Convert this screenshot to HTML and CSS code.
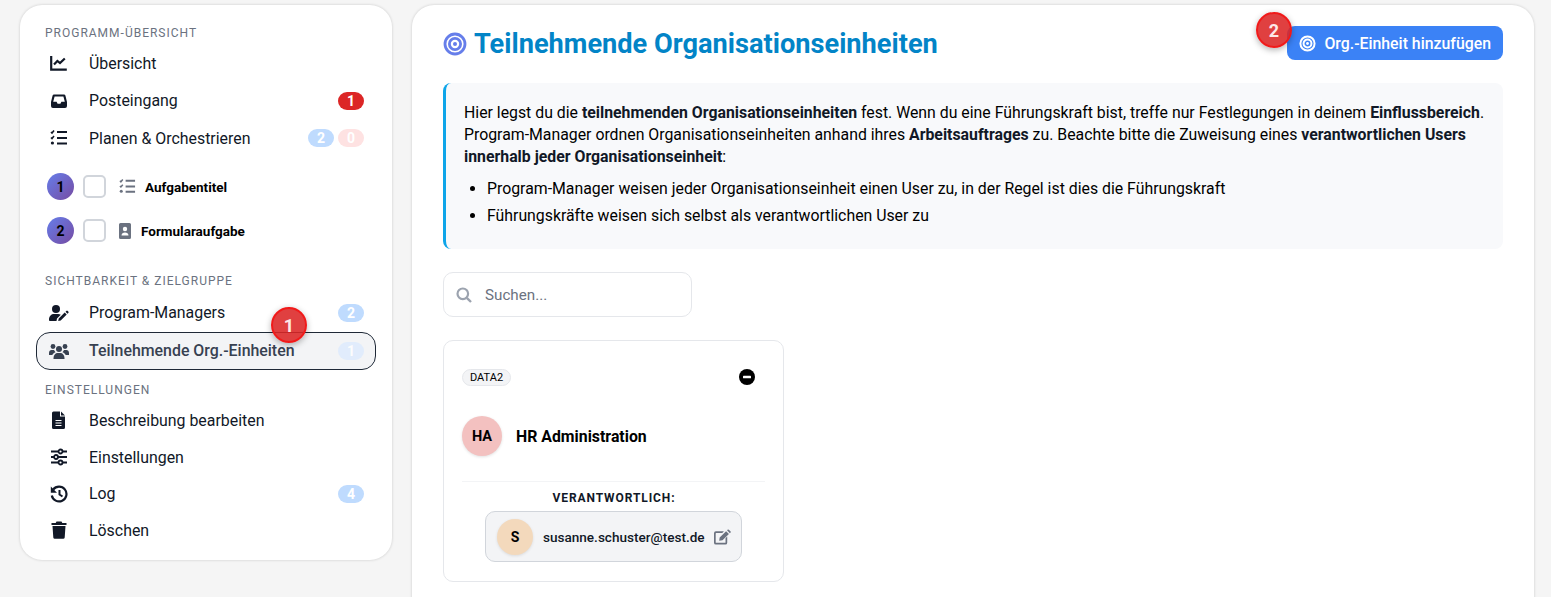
FILE: index.html
```html
<!DOCTYPE html>
<html lang="de">
<head>
<meta charset="utf-8">
<title>Teilnehmende Organisationseinheiten</title>
<link rel="stylesheet" href="styles.css">
</head>
<body>
<svg class="defs" width="0" height="0" aria-hidden="true">
  <symbol id="i-list" viewBox="0 0 18 18">
    <path d="M1 3l1 1 2-2.400M1 8.500l1 1 2-2.400" fill="none" stroke="currentColor" stroke-width="1.600"/>
    <circle cx="2.400" cy="14" r="1.600" fill="currentColor"/>
    <path d="M7 3h10M7 9h10M7 14.500h10" fill="none" stroke="currentColor" stroke-width="2.100"/>
  </symbol>
  <symbol id="i-target" viewBox="0 0 24 24">
    <circle cx="12" cy="12" r="10" fill="none" stroke="currentColor" stroke-width="2.800"/>
    <circle cx="12" cy="12" r="5.600" fill="none" stroke="currentColor" stroke-width="2.800"/>
    <circle cx="12" cy="12" r="2" fill="currentColor"/>
  </symbol>
</svg>
<div class="page">
  <aside class="sidebar">
    <div class="section-label">Programm-Übersicht</div>
    <a class="nav-row">
      <svg class="nav-icon" viewBox="0 0 18 18"><path d="M1.200 2v13.600h15.600" fill="none" stroke="currentColor" stroke-width="2.200"/><path d="M4 10.500l3.400-3.600 2.600 2.200 4.800-4.600" fill="none" stroke="currentColor" stroke-width="2.200"/></svg>
      <span class="nav-text">Übersicht</span>
    </a>
    <a class="nav-row">
      <svg class="nav-icon" viewBox="0 0 18 18"><path d="M4 2.500h10a1.500 1.500 0 0 1 1.400 1L17 10v4a2 2 0 0 1-2 2H3a2 2 0 0 1-2-2v-4L2.600 3.500A1.500 1.500 0 0 1 4 2.500zm.6 2L3.200 9.800h3.400l1 2h2.800l1-2h3.400L13.400 4.500z" fill="currentColor" fill-rule="evenodd"/></svg>
      <span class="nav-text">Posteingang</span>
      <span class="badges"><span class="badge badge-red">1</span></span>
    </a>
    <a class="nav-row">
      <svg class="nav-icon"><use href="#i-list"/></svg>
      <span class="nav-text">Planen &amp; Orchestrieren</span>
      <span class="badges"><span class="badge badge-blue">2</span><span class="badge badge-pink">0</span></span>
    </a>
    <div class="task task-first">
      <span class="task-num">1</span><span class="task-check"></span>
      <svg class="task-icon"><use href="#i-list"/></svg>
      <span class="task-title">Aufgabentitel</span>
    </div>
    <div class="task">
      <span class="task-num">2</span><span class="task-check"></span>
      <svg class="task-icon task-icon-form" viewBox="0 0 12 16"><path d="M1.500 0h9A1.500 1.500 0 0 1 12 1.500v13a1.500 1.500 0 0 1-1.500 1.500h-9A1.500 1.500 0 0 1 0 14.500v-13A1.500 1.500 0 0 1 1.500 0z" fill="currentColor"/><circle cx="6" cy="6" r="2.200" fill="#fff"/><path d="M2.500 12.500c0-2 1.500-3 3.500-3s3.500 1 3.500 3z" fill="#fff"/></svg>
      <span class="task-title">Formularaufgabe</span>
    </div>
    <div class="section-label section-two">Sichtbarkeit &amp; Zielgruppe</div>
    <a class="nav-row nav-tall">
      <svg class="nav-icon nav-icon-wide" viewBox="0 0 20 16"><circle cx="7" cy="4" r="4" fill="currentColor"/><path d="M0 14.500C0 11 2.500 9 5 9h4c1 0 2 .3 2.800.8L8 13.500 7.500 16H1a1 1 0 0 1-1-1.500z" fill="currentColor"/><path d="M9.200 16l.5-2.500 6-6 2 2-6 6zM16.500 6.700l.8-.8a1 1 0 0 1 1.400 0l.6.6a1 1 0 0 1 0 1.400l-.8.800z" fill="currentColor"/></svg>
      <span class="nav-text">Program-Managers</span>
      <span class="badges"><span class="badge badge-blue">2</span></span>
    </a>
    <a class="nav-row nav-active">
      <svg class="nav-icon nav-icon-wide" viewBox="0 0 20 16"><circle cx="10" cy="6" r="3" fill="currentColor"/><circle cx="4" cy="3.500" r="2.400" fill="currentColor"/><circle cx="16" cy="3.500" r="2.400" fill="currentColor"/><path d="M4.500 15c0-3 2-5 4-5h3c2 0 4 2 4 5v1h-11zM0 10c0-2 1.200-3 2.500-3h2.500c.5 1 1 1.700 1.500 2.200C4.800 9.700 3.800 10.800 3.300 12H0zM20 10c0-2-1.200-3-2.500-3H15c-.5 1-1 1.700-1.500 2.200 1.700.5 2.700 1.600 3.200 2.800H20z" fill="currentColor"/></svg>
      <span class="nav-text">Teilnehmende Org.-Einheiten</span>
      <span class="badges"><span class="badge badge-pale">1</span></span>
    </a>
    <div class="section-label section-three">Einstellungen</div>
    <a class="nav-row nav-tight">
      <svg class="nav-icon" viewBox="0 0 18 18"><path d="M3.500 0.500H10v5h5v11a1.500 1.500 0 0 1-1.500 1.500h-10A1.500 1.500 0 0 1 2 16.500v-14.500A1.500 1.500 0 0 1 3.500 0.500zM11 .5l4 4h-4z" fill="currentColor"/><path d="M5.500 9.500h6M5.500 12h6M5.500 14.500h6" stroke="#fff" stroke-width="1.100"/></svg>
      <span class="nav-text">Beschreibung bearbeiten</span>
    </a>
    <a class="nav-row nav-tight">
      <svg class="nav-icon" viewBox="0 0 18 18"><path d="M1 3.500h16M1 9h16M1 14.500h16" stroke="currentColor" stroke-width="2"/><circle cx="10.500" cy="3.500" r="2" fill="#fff" stroke="currentColor" stroke-width="1.800"/><circle cx="6" cy="9" r="2" fill="#fff" stroke="currentColor" stroke-width="1.800"/><circle cx="10.500" cy="14.500" r="2" fill="#fff" stroke="currentColor" stroke-width="1.800"/></svg>
      <span class="nav-text">Einstellungen</span>
    </a>
    <a class="nav-row nav-tight">
      <svg class="nav-icon" viewBox="0 0 18 18"><path d="M3.200 4.500A7.400 7.400 0 1 1 1.800 10.500" fill="none" stroke="currentColor" stroke-width="2.200"/><path d="M.8 1.500v6.200H7z" fill="currentColor"/><path d="M9.500 5v4.500l3 2" fill="none" stroke="currentColor" stroke-width="2"/></svg>
      <span class="nav-text">Log</span>
      <span class="badges"><span class="badge badge-blue">4</span></span>
    </a>
    <a class="nav-row nav-tight">
      <svg class="nav-icon" viewBox="0 0 18 18"><path d="M6.500 .5h5l.8 1.500H16.500v2h-15v-2h4.200zM2.500 5h13l-.8 11.500a1.500 1.500 0 0 1-1.500 1.300H4.800a1.500 1.500 0 0 1-1.500-1.300z" fill="currentColor"/></svg>
      <span class="nav-text">Löschen</span>
    </a>
    <span class="marker marker-one">1</span>
  </aside>
  <main class="content">
    <header class="head">
      <h1 class="title"><svg class="title-icon"><use href="#i-target"/></svg>Teilnehmende Organisationseinheiten</h1>
      <button class="add-btn"><svg class="btn-icon"><use href="#i-target"/></svg>Org.-Einheit hinzufügen</button>
      <span class="marker marker-two">2</span>
    </header>
    <section class="info">
      <p>Hier legst du die <b>teilnehmenden Organisationseinheiten</b> fest. Wenn du eine Führungskraft bist, treffe nur Festlegungen in deinem <b>Einflussbereich</b>. Program-Manager ordnen Organisationseinheiten anhand ihres <b>Arbeitsauftrages</b> zu. Beachte bitte die Zuweisung eines <b>verantwortlichen Users innerhalb jeder Organisationseinheit</b>:</p>
      <ul>
        <li>Program-Manager weisen jeder Organisationseinheit einen User zu, in der Regel ist dies die Führungskraft</li>
        <li>Führungskräfte weisen sich selbst als verantwortlichen User zu</li>
      </ul>
    </section>
    <div class="search">
      <svg class="search-icon" viewBox="0 0 16 16"><circle cx="6.800" cy="6.800" r="5.300" fill="none" stroke="currentColor" stroke-width="2.200"/><path d="M10.800 10.800l4.200 4.200" stroke="currentColor" stroke-width="2.400"/></svg>
      <span class="search-text">Suchen...</span>
    </div>
    <article class="card">
      <div class="card-top">
        <span class="tag">DATA2</span>
        <svg class="minus" viewBox="0 0 16 16"><circle cx="8" cy="8" r="8" fill="#000"/><rect x="4" y="6.700" width="8" height="2.600" rx=".6" fill="#fff"/></svg>
      </div>
      <div class="org">
        <span class="org-avatar">HA</span>
        <span class="org-name">HR Administration</span>
      </div>
      <div class="resp">
        <div class="resp-label">VERANTWORTLICH:</div>
        <div class="user">
          <span class="user-avatar">S</span>
          <span class="user-mail">susanne.schuster@test.de</span>
          <svg class="edit" viewBox="0 0 18 16"><path d="M2 2h8.500L8.800 3.800H2.200a.4.400 0 0 0-.4.400v9.600c0 .2.200.4.400.4h9.600a.4.400 0 0 0 .4-.4V9.200L14 7.500V14a2 2 0 0 1-2 2H2a2 2 0 0 1-2-2V4a2 2 0 0 1 2-2z" fill="currentColor"/><path d="M6 8.500L12.800 1.800l3 3L9 11.500l-3.500.5zM13.800.8l.5-.5a1 1 0 0 1 1.400 0l1.700 1.700a1 1 0 0 1 0 1.400l-.6.600z" fill="currentColor"/></svg>
        </div>
      </div>
    </article>
  </main>
</div>
</body>
</html>
```
FILE: styles.css
```css
* { box-sizing: border-box; }
html, body { margin: 0; height: 597px; overflow: hidden; }
body { background: #f5f5f5; font-family: Roboto, "Liberation Sans", sans-serif; color: #111827; }
.defs { position: absolute; }
.page { display: flex; align-items: flex-start; gap: 20px; padding: 5px 17px 0 20px; }

.sidebar { position: relative; flex: 0 0 372px; height: 555px; padding: 21px 16px 0; background: #fff; border-radius: 22px; box-shadow: 0 0 3px rgba(0,0,0,.18); }
.section-label { padding-left: 9px; font-size: 12px; line-height: 14px; letter-spacing: 1px; text-transform: uppercase; color: #6b7280; }
.section-two { margin-top: 29px; }
.section-three { margin-top: 13px; }
.nav-row { display: flex; align-items: center; height: 37.500px; padding: 0 11px 0 13px; border: 1px solid transparent; border-radius: 14px; }
.section-label + .nav-row { margin-top: 4.500px; }
.section-two + .nav-row { margin-top: 6px; }
.section-three + .nav-row { margin-top: 5.700px; }
.nav-tall { height: 38.500px; }
.nav-tight { height: 36.600px; }
.nav-icon { flex: 0 0 18px; width: 18px; height: 18px; margin-right: 21px; color: #111827; }
.nav-icon-wide { flex: 0 0 20px; width: 20px; margin-left: -1px; margin-right: 20px; }
.nav-text { flex: 1; font-size: 15.900px; color: #111827; white-space: nowrap; }
.nav-active { background: #f3f4f6; border-color: #1f2937; }
.nav-active .nav-text { font-weight: 500; color: #374151; }
.nav-active .nav-icon { color: #374151; }
.badges { display: flex; gap: 4px; }
.badge { width: 26px; height: 18px; border-radius: 9px; font-size: 14px; font-weight: 700; line-height: 18px; text-align: center; color: #fff; }
.badge-red { background: #dc2626; }
.badge-blue { background: #bfdbfe; }
.badge-pink { background: #fee2e2; }
.badge-pale { background: #dbeafe; opacity: .75; }

.task { display: flex; align-items: center; height: 28px; margin-top: 16px; padding-left: 11px; }
.task-first { margin-top: 15.500px; }
.task-num { display: flex; align-items: center; justify-content: center; width: 27px; height: 27px; border-radius: 50%; background: linear-gradient(135deg, #667eea, #764ba2); font-size: 14px; font-weight: 700; color: #000; }
.task-check { width: 23px; height: 23px; margin: 0 13px 0 9px; background: #fff; border: 2px solid #d1d5db; border-radius: 5px; }
.task-icon { width: 17px; height: 17px; margin-right: 9px; color: #6b7280; }
.task-icon-form { width: 12px; height: 16px; }
.task-icon-form + .task-title { margin-left: 1px; }
.task-title { font-size: 13.500px; font-weight: 700; color: #000; }

.content { flex: 1; height: 640px; padding: 21px 31px 0; background: #fff; border-radius: 22px; box-shadow: 0 0 3px rgba(0,0,0,.18); position: relative; }
.head { position: relative; display: flex; align-items: center; justify-content: space-between; height: 34px; margin-bottom: 23px; }
.title { display: flex; align-items: center; margin: 1px 0 0; font-size: 27.200px; font-weight: 700; line-height: 34px; color: #0284c7; }
.title-icon { width: 24px; height: 24px; margin-right: 7px; color: #667eea; }
.add-btn { display: flex; align-items: center; height: 34px; padding: 0 12px; background: #3b82f6; border: 0; border-radius: 8px; font: 500 15.850px Roboto, sans-serif; color: #fff; }
.btn-icon { width: 17px; height: 17px; margin-right: 8px; }
.info { height: 166px; padding: 19px 15px 0 18px; background: #f8f9fb; border-left: 3px solid #0ea5e9; border-radius: 8px; font-size: 15.830px; line-height: 22px; color: #000; }
.info p { margin: 0; }
.info b { font-weight: 700; color: #111827; }
.info ul { margin: 10px 0 0; padding-left: 23px; }
.info li { margin-bottom: 5px; }
.search { display: flex; align-items: center; width: 249px; height: 45px; margin-top: 23px; padding-left: 12px; border: 1px solid #e5e7eb; border-radius: 10px; }
.search-icon { width: 16px; height: 16px; margin-right: 13px; color: #9ca3af; }
.search-text { font-size: 15.200px; color: #6b7280; }
.card { width: 341px; height: 242px; margin-top: 23px; padding: 0 18px; border: 1px solid #e5e7eb; border-radius: 10px; }
.card-top { display: flex; align-items: center; justify-content: space-between; height: 72px; padding-right: 10px; }
.tag { height: 17px; padding: 0 7px; background: #f3f4f6; border: 1px solid #e5e7eb; border-radius: 9px; font-size: 11px; line-height: 15px; color: #000; }
.minus { width: 16px; height: 16px; }
.org { display: flex; align-items: center; height: 40px; margin-top: 3px; }
.org-avatar { display: flex; align-items: center; justify-content: center; width: 40px; height: 40px; margin-right: 14px; border-radius: 50%; background: #f3c1c0; font-size: 14.500px; font-weight: 700; color: #000; box-shadow: 0 1px 3px rgba(0,0,0,.12); }
.org-name { margin-top: 1px; font-size: 15.850px; font-weight: 700; color: #000; }
.resp { margin-top: 25px; border-top: 1px solid #f3f4f6; }
.resp-label { margin-top: 9px; padding-left: 1px; font-size: 12px; font-weight: 700; line-height: 14px; letter-spacing: .9px; text-align: center; color: #111827; }
.user { display: flex; align-items: center; width: 257px; height: 51px; margin: 6px 0 0 23px; padding-left: 11px; background: #f3f4f6; border: 1px solid #d1d5db; border-radius: 10px; }
.user-avatar { display: flex; align-items: center; justify-content: center; width: 36px; height: 36px; margin-right: 10px; border-radius: 50%; background: #f3d9bc; font-size: 14px; font-weight: 700; color: #000; box-shadow: 0 1px 3px rgba(0,0,0,.1); }
.user-mail { font-size: 13.550px; font-weight: 500; color: #111827; white-space: nowrap; }
.edit { width: 17px; height: 16px; margin-left: 9px; color: #6b7280; }

.marker { position: absolute; display: flex; align-items: center; justify-content: center; width: 36px; height: 36px; border: 2px solid #f01a1a; border-radius: 50%; background: rgba(220,38,38,.88); font-size: 18px; font-weight: 700; color: #fde8e8; box-shadow: 0 2px 6px rgba(0,0,0,.3); }
.marker-one { left: 251px; top: 302px; }
.marker-two { right: 211px; top: -14px; }
```
